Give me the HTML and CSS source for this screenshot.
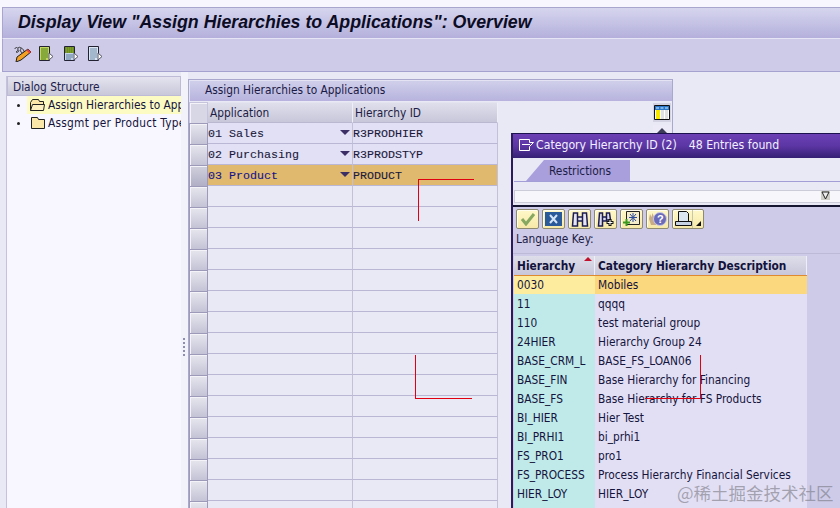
FILE: index.html
```html
<!DOCTYPE html>
<html lang="en">
<head>
<meta charset="utf-8">
<title>Display View</title>
<link rel="stylesheet" href="styles.css">
</head>
<body>
<div class="screen">
  <header class="title"><h1>Display View "Assign Hierarchies to Applications": Overview</h1></header>
  <nav class="toolbar">
    <svg class="tool pencil" width="18" height="16" viewBox="0 0 18 16"><path d="M1 3c0-2 3-2 3 0s-1 2-2 3c2 1 3-1 3-2M4 2c1-1 2-1 3 0 1 0 2 1 3 3 1 2-2 3-3 1s0-3 0-4" fill="none" stroke="#333"/><path d="M14 3l3 3-10 8-5 2 1-5z" fill="#f4a020" stroke="#222"/><path d="M14 3l3 3-1.500 1.500-3-3z" fill="#e84040"/></svg>
    <svg class="tool docg" width="16" height="16" viewBox="0 0 16 16"><path d="M1.500.5h10v14h-10z" fill="#c4d860" stroke="#223"/><path d="M3 3h7M3 5h7M3 7h7M3 9h7M3 11h7M3 13h5" stroke="#4a7a18"/><path d="M11 7l4 3.500-4 3.500z" fill="#fff" stroke="#556"/></svg>
    <svg class="tool docm" width="16" height="16" viewBox="0 0 16 16"><path d="M1.500.5h10v14h-10z" fill="#c6d6ea" stroke="#223"/><path d="M2 1h9v6H2z" fill="#6a8c20"/><path d="M3 2h7M3 4h7M3 6h7" stroke="#90aa30" stroke-dasharray="1 1"/><path d="M3 9h7M3 11h7M3 13h5" stroke="#5a7a9a"/><path d="M11 7l4 3.500-4 3.500z" fill="#fff" stroke="#556"/></svg>
    <svg class="tool docb" width="16" height="16" viewBox="0 0 16 16"><path d="M1.500.5h10v14h-10z" fill="#dce6f2" stroke="#223"/><path d="M3 3h7M3 5h7M3 7h7M3 9h7M3 11h7M3 13h5" stroke="#6a8aa8"/><path d="M11 7l4 3.500-4 3.500z" fill="#fff" stroke="#556"/></svg>
  </nav>
  <main class="work">
    <aside class="tree">
      <div class="tree-head">Dialog Structure</div>
      <ul class="tree-list">
        <li class="tree-row selected"><span class="bullet"></span><span class="tree-item"><svg class="folder" width="17" height="14" viewBox="0 0 17 14"><path d="M1.500 12.500v-8l2-3h6l1 2h4v3" fill="#fbe8a8" stroke="#222"/><path d="M1.500 12.500l2-6h12l-1 6z" fill="#fdf0c0" stroke="#222"/></svg><span class="clip">Assign Hierarchies to Applications</span></span></li>
        <li class="tree-row"><span class="bullet"></span><span class="tree-item"><svg class="folder" width="17" height="14" viewBox="0 0 17 14"><path d="M2.500 12.500v-11h6l1 2h6v9z" fill="#fbe8a8" stroke="#222"/></svg><span class="clip wide">Assgmt per Product Type</span></span></li>
      </ul>
    </aside>
    <div class="splitter"><span class="grip"></span></div>
    <section class="panel">
      <div class="panel-title">Assign Hierarchies to Applications</div>
      <div class="grid-area">
        <div class="grid">
          <div class="sel head"></div><div class="hcell">Application</div><div class="hcell">Hierarchy ID</div>
          <div class="sel"></div><div class="cell mono drop">01 Sales<i class="arrow"></i></div><div class="cell mono id">R3PRODHIER</div>
          <div class="sel"></div><div class="cell mono drop">02 Purchasing<i class="arrow"></i></div><div class="cell mono id">R3PRODSTYP</div>
          <div class="sel on"></div><div class="cell mono drop hi blue">03 Product<i class="arrow"></i></div><div class="cell mono id hi">PRODUCT</div>
          <div class="sel"></div><div class="cell"></div><div class="cell"></div>
          <div class="sel"></div><div class="cell"></div><div class="cell"></div>
          <div class="sel"></div><div class="cell"></div><div class="cell"></div>
          <div class="sel"></div><div class="cell"></div><div class="cell"></div>
          <div class="sel"></div><div class="cell"></div><div class="cell"></div>
          <div class="sel"></div><div class="cell"></div><div class="cell"></div>
          <div class="sel"></div><div class="cell"></div><div class="cell"></div>
          <div class="sel"></div><div class="cell"></div><div class="cell"></div>
          <div class="sel"></div><div class="cell"></div><div class="cell"></div>
          <div class="sel"></div><div class="cell"></div><div class="cell"></div>
          <div class="sel"></div><div class="cell"></div><div class="cell"></div>
          <div class="sel"></div><div class="cell"></div><div class="cell"></div>
          <div class="sel"></div><div class="cell"></div><div class="cell"></div>
          <div class="sel"></div><div class="cell"></div><div class="cell"></div>
          <div class="sel"></div><div class="cell"></div><div class="cell"></div>
          <div class="sel"></div><div class="cell"></div><div class="cell"></div>
        </div>
        <div class="grid-side">
          <span class="config"><svg width="16" height="15" viewBox="0 0 16 15"><path d="M.5.500h15v14H.5z" fill="#fff" stroke="#111"/><path d="M1 1h14v4H1z" fill="#2a76c8"/><path d="M2 2h3v2H2zM6.500 2h3v2h-3zM11 2h3v2h-3z" fill="#7ab4e8"/><path d="M2 5h4v9H2z" fill="#f8e800"/><path d="M7 5h3v9H7zM11 5h3v9h-3z" fill="#e0e0e0"/></svg></span>
          <span class="scroll-up"></span>
        </div>
      </div>
    </section>
  </main>

  <section class="popup">
    <div class="pop-title">
      <svg width="15" height="12" viewBox="0 0 15 12"><path d="M.5.500h10v3h4l-4 4v4H.5zM3 5.500h8" fill="none" stroke="#fff"/></svg>
      <span class="pop-name">Category Hierarchy ID (2)</span><span>48 Entries found</span>
    </div>
    <div class="pop-body">
      <div class="tabs"><span class="tab">Restrictions</span></div>
      <div class="strip"><svg class="filter" width="9" height="9" viewBox="0 0 9 9"><path d="M0 0h9v9H0z" fill="#cfcfc8"/><path d="M1 1h7L4.500 8z" fill="#eee" stroke="#222"/></svg></div>
      <div class="pop-tools">
        <span class="btn"><svg width="16" height="14" viewBox="0 0 16 14"><path d="M2 7l4 5 8-10" fill="none" stroke="#86a860" stroke-width="3"/></svg></span>
        <span class="btn"><svg width="17" height="14" viewBox="0 0 17 14"><path d="M0 0h17v14H0z" fill="#2a5a9a"/><path d="M5 3l7 8M12 3l-7 8" stroke="#d4e4f4" stroke-width="2"/></svg></span>
        <span class="btn"><svg width="18" height="15" viewBox="0 0 18 15"><path d="M2.500 1h4v13h-5zM11.500 1h4l1 13h-5zM6.500 5h5v4h-5z" fill="#e4e4f2" stroke="#1c1c50" stroke-width="1.500"/></svg></span>
        <span class="btn"><svg width="18" height="15" viewBox="0 0 18 15"><path d="M2.500 1h3v13h-4zM9.500 1h3l1 7h-4zM5.500 5h4v4h-4z" fill="#dcdcee" stroke="#1c1c50" stroke-width="1.500"/><path d="M13 7v7M9.500 10.500h7" stroke="#111" stroke-width="3"/><path d="M13 8v5M10.500 10.500h5" stroke="#fff"/></svg></span>
        <span class="btn"><svg width="18" height="16" viewBox="0 0 18 16"><path d="M3.500.5h13v13h-13z" fill="#f4ecc8" stroke="#222"/><path d="M10 2v9M6 6.500h8M7 3l6 7M13 3l-6 7" stroke="#2a4a9a"/><path d="M3.500 8v7M0 11.500h7" stroke="#3a9a20" stroke-width="2"/></svg></span>
        <span class="btn"><svg width="19" height="16" viewBox="0 0 19 16"><path d="M1 8l1-5 1.500 3 1-4 1.500 4L8 4v10H3z" fill="#c8ac88"/><circle cx="12" cy="8" r="6.500" fill="#6a6ab8" stroke="#c8c8e8"/><text x="9" y="12" class="q">?</text></svg></span>
        <span class="btn print"><svg width="17" height="16" viewBox="0 0 17 16"><path d="M3.500.5h8l2 2v8h-10z" fill="#dce6f0" stroke="#111"/><path d="M.5 10.500h16v4H.5z" fill="#c8d4e4" stroke="#111"/></svg><i class="menu"></i></span>
      </div>
      <div class="lang">Language Key:</div>
      <div class="list">
        <div class="lhead first">Hierarchy<i class="sort"></i></div><div class="lhead">Category Hierarchy Description</div>
        <div class="key hot">0030</div><div class="desc hot2">Mobiles</div>
        <div class="key">11</div><div class="desc">qqqq</div>
        <div class="key">110</div><div class="desc">test material group</div>
        <div class="key">24HIER</div><div class="desc">Hierarchy Group 24</div>
        <div class="key">BASE_CRM_L</div><div class="desc">BASE_FS_LOAN06</div>
        <div class="key">BASE_FIN</div><div class="desc">Base Hierarchy for Financing</div>
        <div class="key">BASE_FS</div><div class="desc">Base Hierarchy for FS Products</div>
        <div class="key">BI_HIER</div><div class="desc">Hier Test</div>
        <div class="key">BI_PRHI1</div><div class="desc">bi_prhi1</div>
        <div class="key">FS_PRO1</div><div class="desc">pro1</div>
        <div class="key">FS_PROCESS</div><div class="desc">Process Hierarchy Financial Services</div>
        <div class="key">HIER_LOY</div><div class="desc">HIER_LOY</div>
        <div class="key"></div><div class="desc"></div>
      </div>
    </div>
  </section>

  <i class="red r1"></i><i class="red r2"></i>
  <i class="red r3"></i><i class="red r4"></i>
  <i class="red r5"></i><i class="red r6"></i>
  <div class="mark">@稀土掘金技术社区</div>
</div>
</body>
</html>
```

FILE: styles.css
```css
* { box-sizing: border-box; }
html, body { margin: 0; padding: 0; }
body { width: 840px; height: 508px; overflow: hidden; background: #f7f6fe; font-family: "DejaVu Sans Condensed", "DejaVu Sans", sans-serif; font-size: 11.800px; color: #14143c; }
.screen { position: relative; width: 840px; height: 508px; overflow: hidden; padding-top: 7px; display: flex; flex-direction: column; }
h1 { margin: 0; font: italic bold 17.800px "Liberation Sans", sans-serif; color: #0c0c24; white-space: nowrap; }
.title { height: 31px; margin-left: 2px; padding: 4px 0 0 15px; background: linear-gradient(#d6d5ee, #b4b0dc); border-top: 1px solid #a8a5cf; border-left: 1px solid #a8a5cf; }
.toolbar { height: 34px; margin-left: 2px; display: flex; align-items: center; padding: 0 0 2px 0; background: #cdcbe8; border-top: 1px solid #e6e5f5; border-bottom: 1px solid #a5a2cf; border-left: 1px solid #a8a5cf; }
.tool { flex: none; }
.pencil { margin-left: 11px; }
.docg { margin-left: 6px; }
.docm { margin-left: 9px; }
.docb { margin-left: 8px; }
.work { flex: 1; display: flex; min-height: 0; padding-left: 6px; background: #e9e9f5; }
.tree { width: 175px; background: #f8f7ff; margin-top: 4px; border-left: 1px solid #c4c2dc; }
.tree-head { height: 20px; padding: 0 5px; line-height: 20px; background: linear-gradient(#e4e3ee, #c9c8da); border: 1px solid #bdbbd6; color: #20204a; }
.tree-list { margin: 0; padding: 0; list-style: none; }
.tree-row { height: 18px; display: flex; align-items: center; overflow: hidden; }
.bullet { width: 3px; height: 3px; margin-left: 10px; background: #222; flex: none; border-radius: 50%; }
.tree-item { display: flex; align-items: center; gap: 2px; margin-left: 7px; padding-left: 2px; height: 18px; flex: 1; min-width: 0; white-space: nowrap; overflow: hidden; }
.folder { flex: none; }
.selected .tree-item { background: #fdfbc4; }
.clip { line-height: 18px; }
.wide { letter-spacing: 0.25px; }
.splitter { width: 7px; position: relative; background: #f2f2fb; }
.grip { position: absolute; left: 2px; top: 266px; width: 2px; height: 18px; background: repeating-linear-gradient(#8e8cb0 0 2px, transparent 2px 4px); }
.panel { flex: 1; min-width: 0; margin-top: 7px; margin-right: 167px; border: 1px solid #aaa8cc; border-bottom: 0; background: #e9e9f5; }
.panel-title { height: 21px; padding-left: 15px; line-height: 18px; background: linear-gradient(#d0cfea, #b7b3de); border: 1px solid #e4e3f3; border-width: 1px 0 0 1px; color: #1a1a44; }
.grid-area { display: flex; padding-top: 1px; background: #e9e9f5; }
.grid { display: grid; grid-template-columns: 19px 145px 145px; grid-auto-rows: 21px; flex: none; }
.sel { border: 1px solid #9c9ab8; background: linear-gradient(#e6e6ee, #c4c3d6); box-shadow: inset 1px 1px 0 #f4f4f8; border-bottom: 0; }
.sel.on { background: linear-gradient(#d0d0dc, #b0afc6); }
.sel.head { background: #d8d7e6; border-color: #c6c4dc; }
.hcell { padding: 0 2px; line-height: 20px; background: linear-gradient(#dfdfec, #c8c7da); border-right: 1px solid #eeeef6; border-bottom: 1px solid #bab8d0; border-top: 1px solid #e4e4f0; color: #1c1c44; }
.cell { position: relative; height: 21px; border-bottom: 1px solid #b9b7d4; border-right: 1px solid #c3c1da; background: #e9e9f5; }
.mono { font: 11.670px/22px "Liberation Mono", monospace; -webkit-text-stroke: 0.1px #1a1a3c; color: #1a1a3c; white-space: nowrap; }
.grid .cell:nth-child(-n+12) { background: #e2e0f4; }
.grid .cell.hi { background: #e0b96e; }
.blue { color: #14148c; -webkit-text-stroke-color: #14148c; }
.arrow { position: absolute; right: 2px; top: 7px; width: 0; height: 0; border: 5px solid transparent; border-top: 5px solid #3c2f66; border-bottom: 0; }
.grid-side { flex: none; width: 175px; display: flex; flex-direction: column; align-items: flex-end; padding: 1px 2px 0 0; }
.config { width: 18px; height: 19px; display: flex; align-items: center; justify-content: center; background: #d4d3e4; }
.scroll-up { width: 18px; height: 10px; margin-top: 3px; position: relative; background: #eceaf6; }
.scroll-up::after { content: ""; position: absolute; left: 4px; top: 3px; border-style: solid; border-width: 0 5px 5px; border-color: transparent transparent #3c3c58; }
.popup { position: absolute; left: 511px; top: 133px; width: 340px; height: 380px; border-left: 2px solid #2c1c5c; border-top: 1px solid #1c1250; background: #e9e9f5; }
.pop-title { height: 24px; display: flex; align-items: center; padding: 0 0 3px 6px; gap: 12px; background: linear-gradient(#6c40b4 0%, #5c36a4 50%, #352074 100%); color: #f2f0ff; font-size: 12.200px; white-space: nowrap; }
.pop-title svg { margin-right: -10px; }
.pop-body { position: relative; display: flex; flex-direction: column; }
.tabs { height: 22px; margin: 2px 0 0 1px; padding-left: 12px; border-bottom: 1px solid #a39fd6; }
.tab { display: block; width: 104px; height: 21px; padding-left: 23px; line-height: 22px; background: #a89fdc; clip-path: polygon(18px 0, 100% 0, 100% 100%, 0 100%); color: #1c1c44; }
.strip { position: relative; height: 13px; margin: 8px 0 0 1px; background: #f6f6fb; border: 1px solid #ccccd8; border-right: 0; }
.filter { position: absolute; left: 306px; top: 0; }
.pop-tools { height: 26px; margin-top: 2px; display: flex; gap: 3px; align-items: flex-start; padding: 2px 0 0 3px; background: #cecbe9; border-top: 2px solid #151530; }
.btn { width: 23px; height: 20px; flex: none; display: flex; align-items: center; justify-content: center; border: 1px solid #8e8a70; border-radius: 2px; background: linear-gradient(#fff8c8, #f6e8a8); box-shadow: inset 1px 1px 0 #fffdf0; }
.print { width: 32px; justify-content: flex-start; padding-left: 2px; position: relative; }
.menu { position: absolute; right: 0; top: 0; width: 11px; height: 18px; border-left: 1px solid #c8c8a8; }
.menu::after { content: ""; position: absolute; right: 2px; bottom: 2px; border-style: solid; border-width: 0 0 5px 5px; border-color: transparent transparent #111 transparent; }
.q { font: bold 11px "Liberation Sans", sans-serif; fill: #fff; }
.lang { height: 25px; padding-left: 3px; line-height: 17px; background: #cecbe9; color: #1c1c44; box-shadow: inset 0 -2px 0 #cecbe9, inset 0 -3px 0 #bdbad8; }
.list { display: grid; grid-template-columns: 81px 212px 1fr; grid-auto-rows: 19px; padding-left: 1px; background: #cecbe9; }
.lhead { font-weight: 700; line-height: 20px; padding-left: 3px; background: linear-gradient(#dedeea, #c8c7da); border-right: 1px solid #eeeef6; color: #12123c; position: relative; white-space: nowrap; }
.lhead + .lhead { grid-column: 2; }
.key, .desc { line-height: 20px; padding-left: 3px; white-space: nowrap; color: #14143c; }
.key { background: #c0eaea; grid-column: 1; }
.desc { background: #e2dff4; grid-column: 2; }
.hot { background: #fdeb9e; border-top: 1px solid #e08a30; line-height: 18px; }
.hot2 { background: #fbd77e; border-top: 1px solid #e08a30; line-height: 18px; }
.sort { position: absolute; right: 2px; top: 1px; border-style: solid; border-width: 0 4px 4px; border-color: transparent transparent #c0102c; }
.red { position: absolute; background: #e00010; }
.r1 { left: 418px; top: 179px; width: 56px; height: 1px; }
.r2 { left: 418px; top: 179px; width: 1px; height: 42px; }
.r3 { left: 415px; top: 355px; width: 1px; height: 43px; }
.r4 { left: 415px; top: 398px; width: 57px; height: 1px; }
.r5 { left: 700px; top: 355px; width: 1px; height: 43px; }
.r6 { left: 645px; top: 398px; width: 56px; height: 1px; }
.mark { position: absolute; left: 677px; top: 480px; font: 17.500px "Noto Sans CJK SC", sans-serif; color: rgba(120, 120, 130, 0.6); white-space: nowrap; }
```
